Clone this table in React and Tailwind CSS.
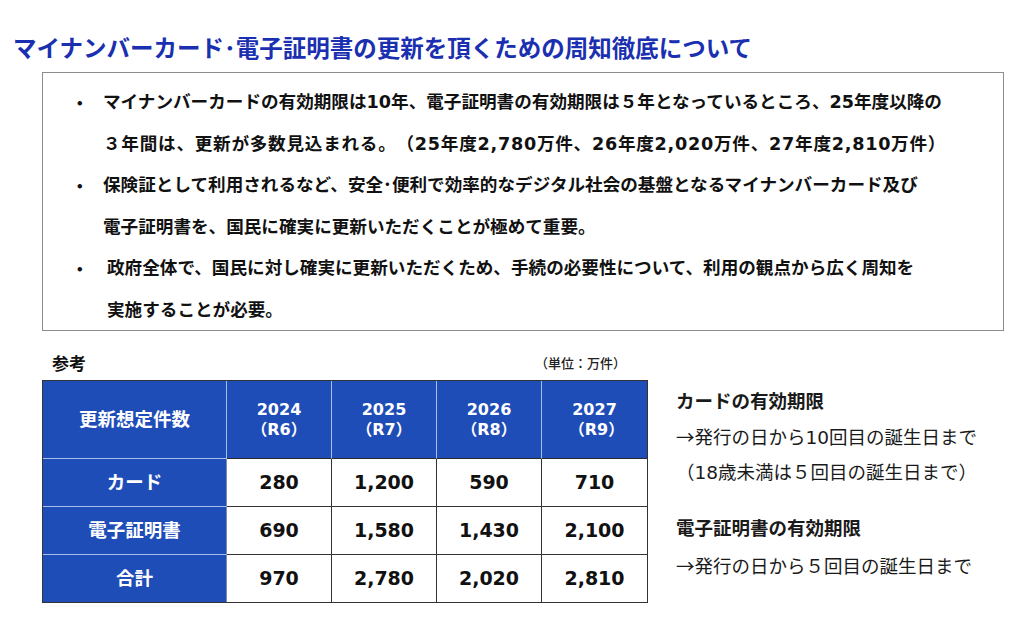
import React from 'react';

// DejaVu first so Latin digits get Verdana-like widths (as Meiryo); CJK falls to Noto
const FONT = { fontFamily: '"DejaVu Sans", "Noto Sans CJK JP", sans-serif' };
const JP = { fontFamily: '"Noto Sans CJK JP", sans-serif' };

const bullets = [
  {
    lines: [
      ['マイナンバーカードの有効期限は10年、電子証明書の有効期限は５年となっているところ、25年度以降の', ''],
      ['３年間は、更新が多数見込まれる。（25年度2,780万件、26年度2,020万件、27年度2,810万件）', 'tracking-[0.75px]'],
    ],
  },
  {
    lines: [
      ['保険証として利用されるなど、安全･便利で効率的なデジタル社会の基盤となるマイナンバーカード及び', ''],
      ['電子証明書を、国民に確実に更新いただくことが極めて重要。', ''],
    ],
  },
  {
    lines: [
      ['政府全体で、国民に対し確実に更新いただくため、手続の必要性について、利用の観点から広く周知を', ''],
      ['実施することが必要。', ''],
    ],
    shift: true,
  },
];

const years = [
  ['2024', '（R6）'],
  ['2025', '（R7）'],
  ['2026', '（R8）'],
  ['2027', '（R9）'],
];

const rows = [
  ['カード', '280', '1,200', '590', '710'],
  ['電子証明書', '690', '1,580', '1,430', '2,100'],
  ['合計', '970', '2,780', '2,020', '2,810'],
];

const Arrow = () => <span style={JP}>→</span>;

const App = () => {
  return (
    <div className="w-[1024px] h-[640px] bg-white overflow-hidden text-[#111] [text-spacing-trim:space-all]" style={FONT}>
      <h1 className="pt-[33px] pl-[13px] text-[23.5px] leading-[28px] font-bold text-[#1a30b0]" style={JP}>
        マイナンバーカード･電子証明書の更新を頂くための周知徹底について
      </h1>

      <div className="mt-[11px] ml-[42px] w-[962px] h-[259px] border-[1.5px] border-[#8c8c8c] pl-[28px] pt-[9px]">
        {bullets.map((b, i) => (
          <div key={i} className="flex text-[17.6px] leading-[41.5px] font-bold">
            <span className="w-[32px] shrink-0" style={JP}>・</span>
            <div className={b.shift ? 'ml-[4px]' : ''}>
              {b.lines.map(([l, cls]) => (
                <div key={l} className={`whitespace-nowrap ${cls}`}>{l}</div>
              ))}
            </div>
          </div>
        ))}
      </div>

      <div className="flex mt-[19px]">
        <div className="ml-[42px] w-[606px]">
          <div className="flex items-end justify-between h-[25px]">
            <span className="ml-[10px] text-[17px] leading-[22px] font-bold">参考</span>
            <span className="mr-[22px] mb-[2px] text-[13px] leading-[18px] font-medium text-[#222]">（単位：万件）</span>
          </div>
          <div className="mt-[5px] border border-[#333] w-[606px]">
            <div className="grid grid-cols-[184px_105px_105px_105px_105px] grid-rows-[78px_48px_48px_47px]">
              <div className="bg-[#1f4db8] border-r border-b border-[#a9bde9] flex items-center justify-center text-white font-bold text-[18.5px]">
                更新想定件数
              </div>
              {years.map(([y, r], i) => (
                <div
                  key={y}
                  className={`bg-[#1f4db8] border-b border-b-[#2a2a2a] ${i < 3 ? 'border-r border-r-[#a9bde9]' : ''} flex flex-col items-center justify-center text-white font-bold text-[16px] leading-[20px]`}
                >
                  <span>{y}</span>
                  <span className={i === 3 ? 'ml-[4px]' : ''}>{r}</span>
                </div>
              ))}
              {rows.map((row, ri) => (
                <React.Fragment key={row[0]}>
                  <div
                    className={`bg-[#1f4db8] border-r border-r-[#7f8ea8] ${ri < 2 ? 'border-b border-b-[#a9bde9]' : ''} flex items-center justify-center text-white font-bold text-[18.5px]`}
                  >
                    {row[0]}
                  </div>
                  {row.slice(1).map((v, ci) => (
                    <div
                      key={ci}
                      className={`bg-white ${ci < 3 ? 'border-r' : ''} ${ri < 2 ? 'border-b' : ''} border-[#333] flex items-center justify-center font-bold text-[19px] text-[#111]`}
                    >
                      {v}
                    </div>
                  ))}
                </React.Fragment>
              ))}
            </div>
          </div>
        </div>

        <div className="ml-[28px] mt-[34px] text-[18.5px] leading-[35px] text-[#1a1a1a] whitespace-nowrap">
          <div className="font-bold">カードの有効期限</div>
          <div><Arrow />発行の日から10回目の誕生日まで</div>
          <div>（18歳未満は５回目の誕生日まで）</div>
          <div className="mt-[21px] font-bold">電子証明書の有効期限</div>
          <div className="mt-[2px]"><Arrow />発行の日から５回目の誕生日まで</div>
        </div>
      </div>
    </div>
  );
};

export default App;
